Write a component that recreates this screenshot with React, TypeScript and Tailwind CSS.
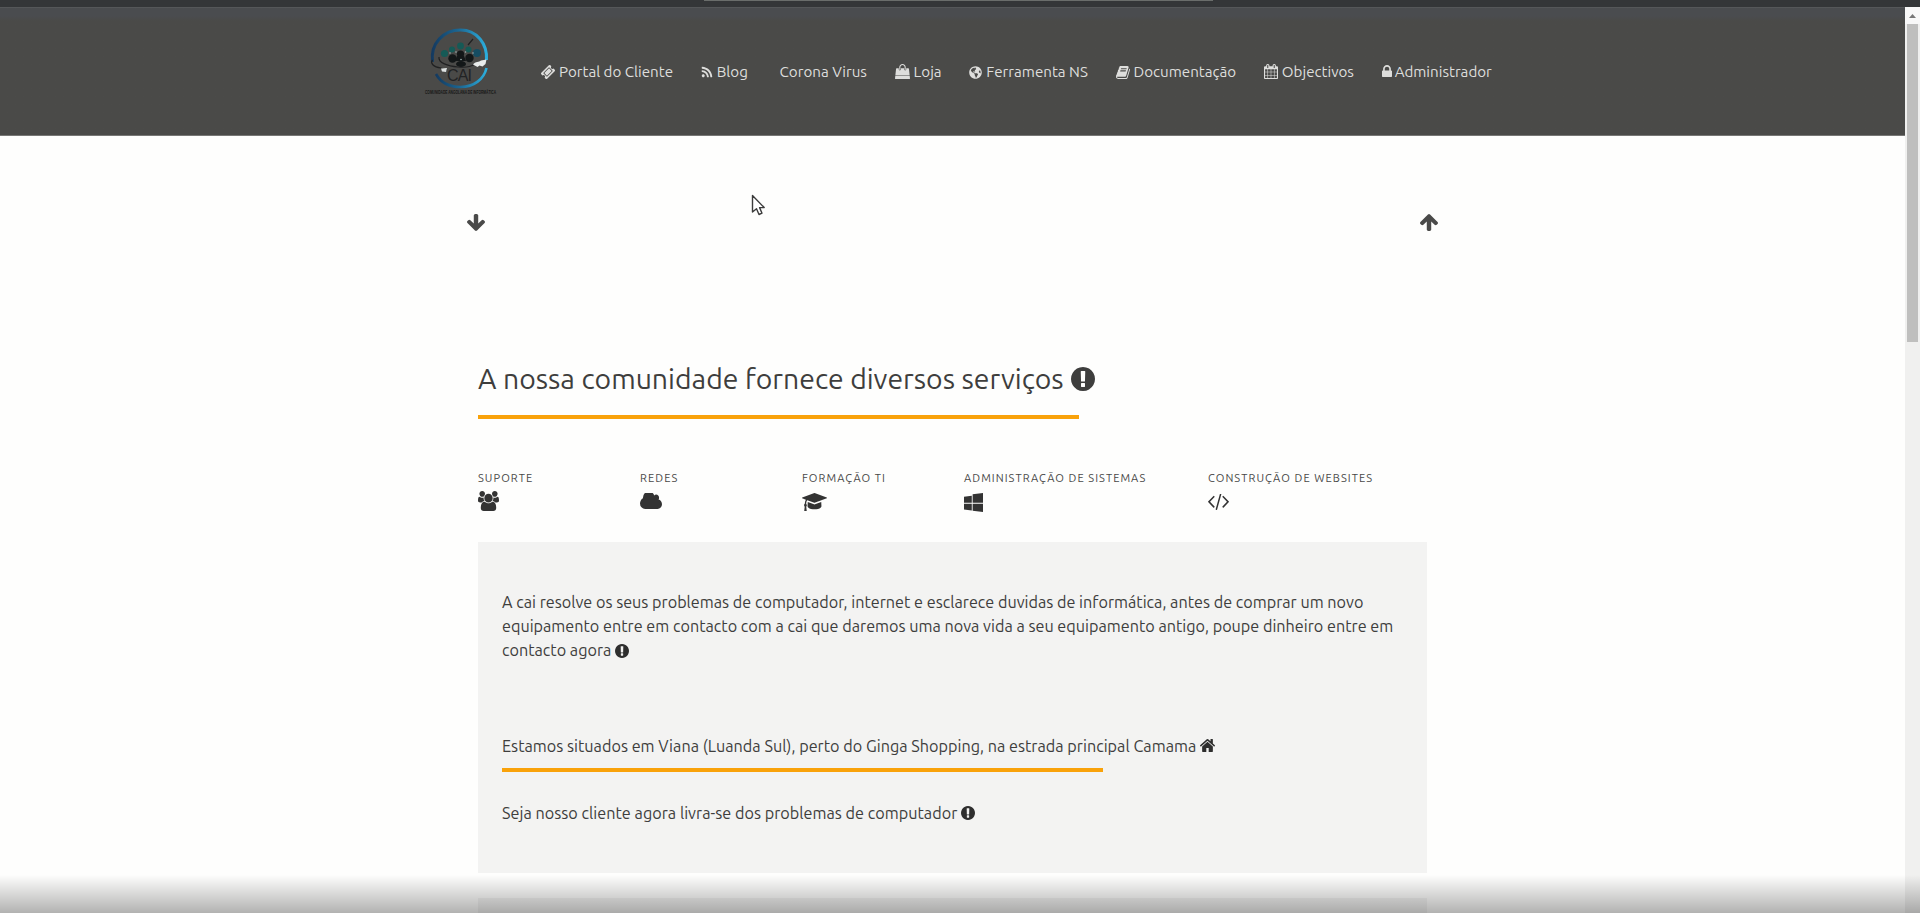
import React from "react";
import { FaGlobeAmericas, FaRss } from "react-icons/fa";

type GlyphProps = { box: string; d: string; className: string };

function Glyph({ box, d, className }: GlyphProps) {
  return (
    <svg viewBox={box} preserveAspectRatio="none" fill="currentColor" className={`shrink-0 ${className}`} aria-hidden="true">
      <path d={d} />
    </svg>
  );
}

const TICKET =
  "M1024 452l316 316-572 572-316-316zm-211 979l618-618q19-19 19-45t-19-45l-362-362q-18-18-45-18t-45 18l-618 618q-19 19-19 45t19 45l362 362q18 18 45 18t45-18zm889-637l-907 908q-37 37-90.5 37t-90.5-37l-126-125q56-56 56-136t-56-136-136-56-136 56l-125-126q-37-37-37-90.5t37-90.5l907-906q37-37 90.5-37t90.5 37l125 125q-56 56-56 136t56 136 136 56 136-56l126 125q37 37 37 90.5t-37 90.5z";
const BAG =
  "M1757 1408l35 313q3 28-16 50-19 21-48 21h-1664q-29 0-48-21-19-22-16-50l35-313h1722zm-93-839l86 775h-1708l86-775q3-24 21-40.5t43-16.5h256v128q0 53 37.5 90.5t90.5 37.5 90.5-37.5 37.5-90.5v-128h384v128q0 53 37.5 90.5t90.5 37.5 90.5-37.5 37.5-90.5v-128h256q25 0 43 16.5t21 40.5zm-384-185v256q0 26-19 45t-45 19-45-19-19-45v-256q0-106-75-181t-181-75-181 75-75 181v256q0 26-19 45t-45 19-45-19-19-45v-256q0-159 112.5-271.5t271.5-112.5 271.5 112.5 112.5 271.5z";
const BOOK =
  "M1703 478q40 57 18 129l-275 906q-19 64-76.5 107.5t-122.5 43.5h-923q-77 0-148.5-53.5t-99.5-131.5q-24-67-2-127 0-4 3-27t4-37q1-8-3-21.5t-3-19.5q2-11 8-21t16.5-23.5 16.5-23.5q23-38 45-91.5t30-91.5q3-10 .5-30t-.5-28q3-11 17-28t17-23q21-36 42-92t25-90q1-9-2.5-32t.5-28q4-13 22-30.5t22-22.5q19-26 42.5-84.5t27.5-96.5q1-8-3-25.5t-2-26.5q2-8 9-18t18-23 17-21q8-12 16.5-30.5t15-35 16-36 19.5-32 26.5-23.5 36-11.5 47.5 5.5l-1 3q38-9 51-9h761q74 0 114 56t18 130l-274 906q-36 119-71.5 153.5t-128.5 34.5h-869q-27 0-38 15-11 16-1 43 24 70 144 70h923q29 0 56-15.5t35-41.5l300-987q7-22 5-57 38 15 59 43zm-1064 2q-4 13 2 22.5t20 9.5h608q13 0 25.5-9.5t16.5-22.5l21-64q4-13-2-22.5t-20-9.5h-608q-13 0-25.5 9.5t-16.5 22.5zm-83 256q-4 13 2 22.5t20 9.5h608q13 0 25.5-9.5t16.5-22.5l21-64q4-13-2-22.5t-20-9.5h-608q-13 0-25.5 9.5t-16.5 22.5z";
const CALENDAR =
  "M192 1664h288v-288h-288v288zm352 0h320v-288h-320v288zm-352-352h288v-320h-288v320zm352 0h320v-320h-320v320zm-352-384h288v-288h-288v288zm736 736h320v-288h-320v288zm-384-736h320v-288h-320v288zm768 736h288v-288h-288v288zm-384-352h320v-320h-320v320zm-352-864v-288q0-13-9.5-22.5t-22.5-9.5h-64q-13 0-22.5 9.5t-9.5 22.5v288q0 13 9.5 22.5t22.5 9.5h64q13 0 22.5-9.5t9.5-22.5zm736 864h288v-320h-288v320zm-384-384h320v-288h-320v288zm384 0h288v-288h-288v288zm32-480v-288q0-13-9.5-22.5t-22.5-9.5h-64q-13 0-22.5 9.5t-9.5 22.5v288q0 13 9.5 22.5t22.5 9.5h64q13 0 22.5-9.5t9.5-22.5zm384-64v1280q0 52-38 90t-90 38h-1408q-52 0-90-38t-38-90v-1280q0-52 38-90t90-38h128v-96q0-66 47-113t113-47h64q66 0 113 47t47 113v96h384v-96q0-66 47-113t113-47h64q66 0 113 47t47 113v96h128q52 0 90 38t38 90z";
const LOCK =
  "M640 768h512v-192q0-106-75-181t-181-75-181 75-75 181v192zm832 96v576q0 40-28 68t-68 28h-960q-40 0-68-28t-28-68v-576q0-40 28-68t68-28h32v-192q0-184 132-316t316-132 316 132 132 316v192h32q40 0 68 28t28 68z";
const ARROW =
  "M1675 832q0 53-37 90l-651 652q-39 37-91 37-53 0-90-37l-651-652q-38-36-38-90 0-53 38-91l74-75q39-37 91-37 53 0 90 37l294 294v-704q0-52 38-90t90-38h128q52 0 90 38t38 90v704l294-294q37-37 90-37 52 0 91 37l75 75q37 39 37 91z";
const EXCLAMATION =
  "M896 128q209 0 385.5 103t279.5 279.5 103 385.5-103 385.5-279.5 279.5-385.5 103-385.5-103-279.5-279.5-103-385.5 103-385.5 279.5-279.5 385.5-103zm128 1247v-190q0-14-9-23.5t-22-9.5h-192q-13 0-23 10t-10 23v190q0 13 10 23t23 10h192q13 0 22-9.5t9-23.5zm-2-344l18-621q0-12-10-18-10-8-24-8h-220q-14 0-24 8-10 6-10 18l17 621q0 10 10 17.5t24 7.5h185q14 0 23.5-7.5t10.5-17.5z";
const HOME =
  "M1472 992v480q0 26-19 45t-45 19h-384v-384h-256v384h-384q-26 0-45-19t-19-45v-480q0-1 .5-3t.5-3l575-474 575 474q1 2 1 6zm223-69l-62 74q-8 9-21 11h-3q-13 0-21-7l-692-577-692 577q-12 8-24 7-13-2-21-11l-62-74q-8-10-7-23.5t11-21.5l719-599q32-26 76-26t76 26l244 204v-195q0-14 9-23t23-9h192q14 0 23 9t9 23v408l219 182q10 8 11 21.5t-7 23.5z";
const USERS =
  "M593 896q-162 5-265 128h-134q-82 0-138-40.5t-56-118.5q0-353 124-353 6 0 43.5 21t97.5 42.5 119 21.5q67 0 133-23-5 37-5 66 0 139 81 256zm1071 637q0 120-73 189.5t-194 69.5h-874q-121 0-194-69.5t-73-189.5q0-53 3.5-103.5t14-109 26.5-108.5 43-97.5 62-81 85.5-53.5 111.5-20q10 0 43 21.5t73 48 107 48 135 21.5 135-21.5 107-48 73-48 43-21.5q61 0 111.5 20t85.5 53.5 62 81 43 97.5 26.5 108.5 14 109 3.5 103.5zm-1024-1277q0 106-75 181t-181 75-181-75-75-181 75-181 181-75 181 75 75 181zm704 384q0 159-112.5 271.5t-271.5 112.5-271.5-112.5-112.5-271.5 112.5-271.5 271.5-112.5 271.5 112.5 112.5 271.5zm576 225q0 78-56 118.5t-138 40.5h-134q-103-123-265-128 81-117 81-256 0-29-5-66 66 23 133 23 59 0 119-21.5t97.5-42.5 43.5-21q124 0 124 353zm-128-609q0 106-75 181t-181 75-181-75-75-181 75-181 181-75 181 75 75 181z";
const CLOUD =
  "M1984 1152q0 159-112.5 271.5t-271.5 112.5h-1088q-185 0-316.5-131.5t-131.5-316.5q0-132 71-241.5t187-163.5q-2-28-2-43 0-212 150-362t362-150q158 0 286.5 88t187.5 230q70-62 166-62 106 0 181 75t75 181q0 75-41 138 129 30 213 134.500t84 239.500z";
const CAP =
  "M1774 836l18 316q4 69-82 128t-235 93.5-323 34.5-323-34.5-235-93.5-82-128l18-316 574 181q22 7 48 7t48-7zm530-324q0 23-22 31l-1120 352q-4 1-10 1t-10-1l-652-206q-43 34-71 111.5t-34 178.5q63 36 63 109 0 69-58 107l58 433q2 14-8 25-9 11-24 11h-192q-15 0-24-11-10-11-8-25l58-433q-58-38-58-107 0-73 65-111 11-207 98-330l-333-104q-22-8-22-31t22-31l1120-352q4-1 10-1t10 1l1120 352q22 8 22 31z";
const WINDOWS =
  "M746 1006v651l-682-94v-557h682zm0-743v659h-682v-565zm982 743v786l-907-125v-661h907zm0-1006v922h-907v-797z";
const CODE =
  "M617 1399l-50 50q-10 10-23 10t-23-10l-466-466q-10-10-10-23t10-23l466-466q10-10 23-10t23 10l50 50q10 10 10 23t-10 23l-393 393 393 393q10 10 10 23t-10 23zm591-1067l-373 1291q-4 13-15.5 19.5t-23.5 2.5l-62-17q-13-4-19.5-15.5t-2.5-24.5l373-1291q4-13 15.5-19.5t23.5-2.5l62 17q13 4 19.5 15.5t2.5 24.5zm657 651l-466 466q-10 10-23 10t-23-10l-50-50q-10-10-10-23t10-23l393-393-393-393q-10-10-10-23t10-23l50-50q10-10 23-10t23 10l466 466q10 10 10 23t-10 23z";

function Logo() {
  return (
    <svg width="78" height="76" viewBox="0 0 78 76" fill="none" aria-label="CAI">
      <defs>
        <linearGradient id="ring" x1="0" y1="0" x2="1" y2="0">
          <stop offset="0" stopColor="#143a60" />
          <stop offset="0.45" stopColor="#1b648f" />
          <stop offset="1" stopColor="#2caedd" />
        </linearGradient>
      </defs>
      <path d="M8.600 37C6 18 20 5 36.500 5C53 5 63.500 19 62.500 35" stroke="url(#ring)" strokeWidth="3" />
      <path d="M12 49C17 58 26 62 36.500 62C50 62 60 54 62.500 43" stroke="url(#ring)" strokeWidth="2.600" />
      <g fill="#155a56">
        <circle cx="20.500" cy="28.500" r="3.600" />
        <circle cx="28" cy="24.500" r="3" />
        <circle cx="36.500" cy="21" r="3.400" />
        <circle cx="44.500" cy="24.500" r="3" />
        <circle cx="53" cy="28" r="4" fill="#164d62" />
      </g>
      <g fill="#131718">
        <circle cx="28.500" cy="33.500" r="4.200" />
        <circle cx="36.500" cy="29" r="3.600" />
        <circle cx="45.500" cy="33" r="4.200" />
        <ellipse cx="37" cy="39" rx="5" ry="3" />
        <path d="M33 31h7l2 5H31z" />
      </g>
      <g fill="#9fb5b3">
        <circle cx="26" cy="28" r="0.800" />
        <circle cx="32" cy="27" r="0.800" />
        <circle cx="41.500" cy="27" r="0.800" />
        <circle cx="49" cy="28" r="0.800" />
        <circle cx="37" cy="34.500" r="0.800" />
      </g>
      <path d="M44 20l5-6M8.500 35C6 38 9 42 17 43L23 45M15 32C14 38 24 41 34 42S48 41 53 38" stroke="#202122" strokeWidth="1.200" />
      <path d="M49 39.500c2.500-3.500 6-2 8-4l5.500-1-1 4.500-3 2.500-3-1-2 1.500z" fill="#e9eceb" />
      <path d="M17 43.500l6-.5-1 4-4-.5z" fill="#dfe3e2" />
      <text x="23" y="55.500" fontSize="16" fontFamily="'Liberation Sans', sans-serif" fill="#222324" textLength="25">
        CAI
      </text>
      <text x="1" y="69" fontSize="5.200" fontWeight="700" fontFamily="'Liberation Sans', sans-serif" fill="#171717" textLength="71" lengthAdjust="spacingAndGlyphs">
        COMUNIDADE ANGOLANA DE INFORMÁTICA
      </text>
    </svg>
  );
}

function NavItem({ icon, label, gap }: { icon: React.ReactNode; label: string; gap: string }) {
  return (
    <a className={`flex items-center whitespace-nowrap ${gap}`}>
      {icon}
      <span>{label}</span>
    </a>
  );
}

function Service({ label, icon, width }: { label: string; icon: React.ReactNode; width: string }) {
  return (
    <div className={`flex flex-col ${width}`}>
      <span className="whitespace-nowrap text-[11.1px] leading-4 tracking-[1.05px] text-[#484847]">{label}</span>
      <div className="mt-[4px] flex h-[22px] items-center text-[#333333]">{icon}</div>
    </div>
  );
}

export default function App() {
  return (
    <div className="relative flex h-[913px] w-full flex-col overflow-hidden bg-[#fefefd] font-['Ubuntu','Noto_Sans',sans-serif] text-[#3e3e3d]">
      <div className="flex h-[7px] shrink-0 justify-center bg-[#343638] pr-[3px]">
        <div className="h-[1px] w-[509px] bg-[#6a6d6b]" />
      </div>
      <div className="flex min-h-0 flex-1">
        <div className="flex min-w-0 flex-1 flex-col">
          <header className="flex h-[129px] shrink-0 border-t border-b border-t-[#555759] border-b-[#777775] bg-linear-to-b from-[#4a4c4f] from-[8px] to-[#4a4a48] to-[13px] pl-[424px]">
            <div className="pt-[17px]">
              <Logo />
            </div>
            <nav className="ml-[39px] mt-[52px] flex h-6 items-center gap-[27.7px] text-[15.15px] leading-6 text-[#dededc]">
              <NavItem gap="gap-[4px]" label="Portal do Cliente" icon={<Glyph box="53 53 1686 1686" d={TICKET} className="h-[14px] w-[14px]" />} />
              <NavItem gap="gap-[4px]" label="Blog" icon={<FaRss className="size-[12px] shrink-0" />} />
              <span className="whitespace-nowrap pl-1">Corona Virus</span>
              <NavItem gap="gap-[4px]" label="Loja" icon={<Glyph box="0 0 1792 1792" d={BAG} className="-mt-[2px] h-[15px] w-[15px]" />} />
              <NavItem gap="gap-[4px]" label="Ferramenta NS" icon={<FaGlobeAmericas className="size-[13px] shrink-0" />} />
              <NavItem gap="gap-[4px]" label="Documentação" icon={<Glyph box="64 128 1664 1536" d={BOOK} className="h-[13px] w-[14px]" />} />
              <NavItem gap="gap-[4px]" label="Objectivos" icon={<Glyph box="64 0 1664 1792" d={CALENDAR} className="-mt-[1px] h-[15px] w-[14px]" />} />
              <NavItem gap="gap-[3px]" label="Administrador" icon={<Glyph box="320 128 1152 1408" d={LOCK} className="-mt-[2px] h-[12px] w-[10px]" />} />
            </nav>
          </header>

          <main className="flex flex-1 flex-col">
            <div className="ml-[467px] mt-[78px] flex w-[971px] justify-between text-[#4a4a49]">
              <Glyph box="117 128 1558 1483" d={ARROW} className="h-[17px] w-[18px]" />
              <Glyph box="117 128 1558 1483" d={ARROW} className="h-[17px] w-[18px] rotate-180" />
            </div>

            <section className="ml-[478px] mt-[131px] w-[949px]">
              <h1 className="flex h-[34px] items-center gap-[7px] whitespace-nowrap text-[28.38px] leading-[34px]">
                A nossa comunidade fornece diversos serviços
                <Glyph box="128 128 1536 1536" d={EXCLAMATION} className="h-[24px] w-[24px]" />
              </h1>
              <div className="mt-[19px] h-1 w-[601px] bg-[#f9a20a]" />

              <div className="mt-[51px] flex">
                <Service width="w-[162px]" label="SUPORTE" icon={<Glyph box="0 0 1920 1792" d={USERS} className="h-[20px] w-[21px]" />} />
                <Service width="w-[162px]" label="REDES" icon={<Glyph box="64 256 1920 1280" d={CLOUD} className="h-[16px] w-[22px]" />} />
                <Service width="w-[162px]" label="FORMAÇÃO TI" icon={<Glyph box="0 128 2304 1408" d={CAP} className="mt-px h-[18px] w-[25px]" />} />
                <Service width="w-[244px]" label="ADMINISTRAÇÃO DE SISTEMAS" icon={<Glyph box="64 0 1664 1792" d={WINDOWS} className="mt-[2px] h-[19px] w-[19px]" />} />
                <Service width="w-[180px]" label="CONSTRUÇÃO DE WEBSITES" icon={<Glyph box="45 310 1830 1336" d={CODE} className="mt-[2px] h-[16px] w-[21px]" />} />
              </div>
            </section>

            <section className="ml-[478px] mt-[30px] h-[331px] w-[949px] shrink-0 bg-[#f3f3f2] px-6 pt-[48px] text-[16.2px] leading-[24.2px]">
              <p className="whitespace-nowrap">
                A cai resolve os seus problemas de computador, internet e esclarece duvidas de informática, antes de comprar um novo
                <br />
                equipamento entre em contacto com a cai que daremos uma nova vida a seu equipamento antigo, poupe dinheiro entre em
              </p>
              <p className="flex items-center gap-[4px]">
                contacto agora
                <Glyph box="128 128 1536 1536" d={EXCLAMATION} className="h-[14px] w-[14px] text-[#2e2e2e]" />
              </p>
              <p className="mt-[71px] flex items-center gap-[4px] whitespace-nowrap tracking-[0.01px]">
                Estamos situados em Viana (Luanda Sul), perto do Ginga Shopping, na estrada principal Camama
                <Glyph box="90 250 1612 1286" d={HOME} className="h-[13px] w-[15px] text-[#2e2e2e]" />
              </p>
              <div className="mt-[10px] h-1 w-[601px] bg-[#f9a20a]" />
              <p className="mt-[29px] flex items-center gap-[4px] tracking-[0.02px]">
                Seja nosso cliente agora livra-se dos problemas de computador
                <Glyph box="128 128 1536 1536" d={EXCLAMATION} className="h-[14px] w-[14px] text-[#2e2e2e]" />
              </p>
            </section>
            <section className="ml-[478px] mt-[25px] h-10 w-[949px] shrink-0 bg-[#f3f3f2]" />
          </main>
        </div>

        <aside className="flex w-[15px] shrink-0 flex-col items-center bg-[#f0f0ef]">
          <div className="flex h-[17px] w-full items-center justify-center bg-[#f8f8f8]">
            <svg width="7" height="4" viewBox="0 0 7 4" fill="#777777">
              <path d="M3.500 0L7 4H0z" />
            </svg>
          </div>
          <div className="h-[318px] w-[11px] bg-[#bfbfbe]" />
        </aside>
      </div>

      <svg className="absolute left-[751px] top-[194px]" width="16" height="23" viewBox="0 0 16 23">
        <path d="M1.500 1.500V18L5.500 14.800L8 20.500L11 19.200L8.600 13.600H13.200z" fill="#ffffff" stroke="#3c3c3c" strokeWidth="1.400" strokeLinejoin="round" />
      </svg>
      <div className="absolute inset-x-0 bottom-0 h-[38px] bg-linear-to-b from-black/0 to-black/30" />
    </div>
  );
}
